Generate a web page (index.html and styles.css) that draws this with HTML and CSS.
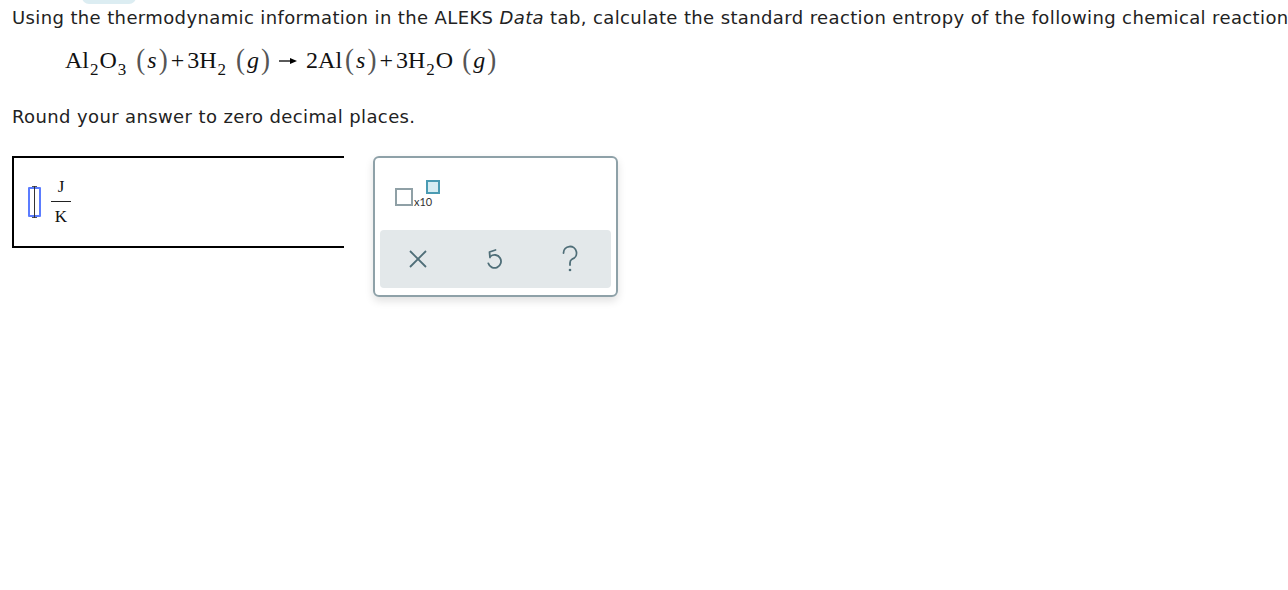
FILE: index.html
```html
<!DOCTYPE html>
<html>
<head>
<meta charset="utf-8">
<link rel="stylesheet" href="styles.css">
</head>
<body>
<div class="pill"></div>
<div class="page">
  <p class="prompt">Using the thermodynamic information in the ALEKS <i>Data</i> tab, calculate the standard reaction entropy of the following chemical reaction:</p>
  <div class="eq">
    <span>Al<sub>2</sub>O<sub>3</sub></span><span class="ph"><span class="par">(</span><i>s</i><span class="par">)</span></span><span class="op">+</span><span>3H<sub>2</sub></span><span class="ph"><span class="par">(</span><i>g</i><span class="par">)</span></span><span class="arrow"><svg width="18" height="8" viewBox="0 0 18 8"><path d="M0 4H12" stroke="#000" stroke-width="1.3"/><path d="M11 1L18 4L11 7Z" fill="#000"/></svg></span><span>2Al</span><span class="ph tight"><span class="par">(</span><i>s</i><span class="par">)</span></span><span class="op">+</span><span>3H<sub>2</sub>O</span><span class="ph"><span class="par">(</span><i>g</i><span class="par">)</span></span>
  </div>
  <p class="round">Round your answer to zero decimal places.</p>
  <div class="work">
    <div class="answer">
      <span class="cursor"></span>
      <span class="frac"><span class="num">J</span><span class="den">K</span></span>
    </div>
    <div class="pad">
      <div class="tools">
        <svg width="48" height="28" viewBox="0 0 48 28">
          <rect x="1" y="9" width="16" height="16" fill="#fff" stroke="#8fa0a6" stroke-width="2"/>
          <text x="19" y="26" font-family="Lato, 'Liberation Sans', sans-serif" font-size="11" fill="#333">x10</text>
          <rect x="32" y="1" width="12" height="12" fill="#d6edf3" stroke="#4a9bb3" stroke-width="2"/>
        </svg>
      </div>
      <div class="bar">
        <button class="btn"><svg width="22" height="22" viewBox="0 0 22 22"><path d="M3 3L19 19M19 3L3 19" stroke="#4f6e78" stroke-width="1.8" fill="none"/></svg></button>
        <button class="btn"><svg width="20" height="24" viewBox="0 0 20 24"><path d="M11.5 3L5.5 5L6 10.5" stroke="#4f6e78" stroke-width="1.8" fill="none" stroke-linecap="round" stroke-linejoin="round"/><path d="M6.4 9.4A6.5 6.5 0 1 1 4.3 16.3" stroke="#4f6e78" stroke-width="1.8" fill="none" stroke-linecap="round"/></svg></button>
        <button class="btn"><svg width="20" height="28" viewBox="0 0 20 28"><path d="M3.5 8A6.5 6.5 0 1 1 12 14.2C10.2 15 10 16 10 18V20" stroke="#4f6e78" stroke-width="1.8" fill="none" stroke-linecap="round"/><circle cx="10" cy="25" r="1.3" fill="#4f6e78"/></svg></button>
      </div>
    </div>
  </div>
</div>
</body>
</html>
```
FILE: styles.css
```css
html, body {
  margin: 0;
  padding: 0;
  background: #fff;
  width: 1288px;
  height: 590px;
  overflow: hidden;
}
body {
  position: relative;
  font-family: "DejaVu Sans", Verdana, sans-serif;
  color: #222;
}
.pill {
  position: absolute;
  left: 82px;
  top: -10px;
  width: 54px;
  height: 14px;
  border-radius: 7px;
  background: #dcedf2;
}
.page {
  padding: 0 0 0 12px;
}
.prompt {
  margin: 0;
  padding-top: 7px;
  font-size: 18px;
  letter-spacing: 0.38px;
  line-height: 22px;
  white-space: nowrap;
}
.eq {
  margin: 17px 0 0 53px;
  height: 28px;
  font-family: "Liberation Serif", "Times New Roman", serif;
  font-size: 24px;
  line-height: 28px;
  color: #111;
  display: flex;
  align-items: baseline;
  white-space: nowrap;
}
.eq sub {
  font-size: 17px;
  vertical-align: -7px;
  line-height: 0;
  margin: 0 1px;
}
.eq .ph {
  margin-left: 9px;
  line-height: 0;
}
.eq .ph.tight {
  margin-left: 3px;
}
.eq i {
  padding: 0 2px;
}
.eq .par {
  color: #555;
  font-size: 27px;
  display: inline-block;
  transform: scaleY(1.08);
}
.eq .op {
  margin: 0 3px;
}
.eq .arrow {
  margin: 0 9px 0 9px;
  align-self: center;
  display: flex;
  position: relative;
  top: 1px;
}
.round {
  margin: 32px 0 0;
  font-size: 18px;
  letter-spacing: 0.38px;
  line-height: 22px;
}
.work {
  display: flex;
  align-items: flex-start;
  margin-top: 28px;
}
.answer {
  box-sizing: border-box;
  width: 332px;
  height: 92px;
  border-top: 2px solid #000;
  border-bottom: 2px solid #000;
  border-left: 2px solid #000;
  display: flex;
  align-items: center;
  padding-left: 14px;
}
.cursor {
  width: 9px;
  height: 26px;
  border: 2px solid #5b7cff;
  border-radius: 1px;
  position: relative;
}
.cursor::after {
  content: "";
  position: absolute;
  left: 4px;
  top: -3px;
  width: 1px;
  height: 32px;
  background: #333;
}
.cursor::before {
  content: "";
  position: absolute;
  left: 2px;
  top: -3px;
  width: 5px;
  height: 32px;
  border-top: 1px solid #555;
  border-bottom: 1px solid #555;
  box-sizing: border-box;
}
.frac {
  display: flex;
  flex-direction: column;
  align-items: center;
  margin-left: 10px;
  font-family: "Liberation Serif", "Times New Roman", serif;
  font-size: 17px;
  line-height: 18px;
  color: #111;
}
.frac .num {
  border-bottom: 1.5px solid #222;
  padding: 0 0 5px;
  width: 20px;
  text-align: center;
}
.frac .den {
  padding-top: 6px;
}
.pad {
  margin-left: 29px;
  width: 245px;
  height: 141px;
  border: 2px solid #8ea1a8;
  border-radius: 6px;
  box-shadow: 0 4px 8px rgba(0,0,0,0.12);
  padding: 0 5px 7px;
  box-sizing: border-box;
  display: flex;
  flex-direction: column;
  justify-content: space-between;
}
.tools {
  padding: 22px 0 0 15px;
  height: 28px;
}
.tools svg { display: block; }
.bar {
  height: 58px;
  background: #e3e8ea;
  border-radius: 4px;
  display: flex;
  align-items: center;
  gap: 36px;
  padding: 0 0 0 18px;
}
.btn {
  border: 0;
  background: transparent;
  padding: 0;
  width: 40px;
  height: 40px;
  display: flex;
  align-items: center;
  justify-content: center;
}
.btn svg { display: block; }
```
